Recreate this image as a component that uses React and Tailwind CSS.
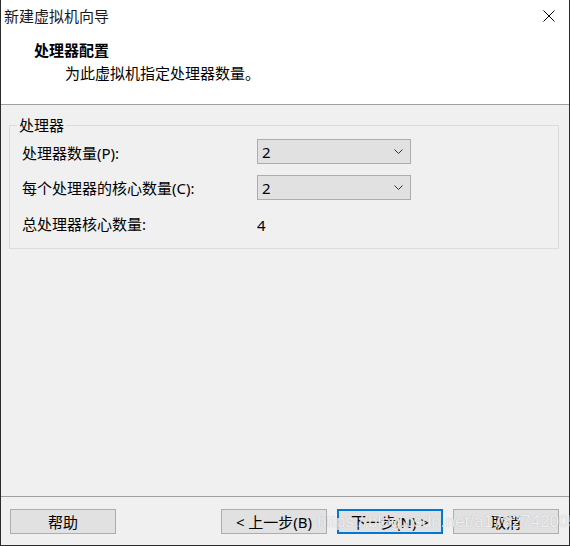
function Chevron() {
  return (
    <svg width="9" height="5" viewBox="0 0 9 5" className="block">
      <polyline points="0.5,0.5 4.5,4.5 8.5,0.5" fill="none" stroke="#333" strokeWidth="1" />
    </svg>
  );
}

function Select({ value }) {
  return (
    <div className="w-[154px] h-[25px] border border-[#adadad] bg-[#e1e1e1] flex items-center justify-between pl-[4px] pr-[7px]">
      <span>{value}</span>
      <Chevron />
    </div>
  );
}

function Button({ children, primary }) {
  return (
    <div
      className={
        primary
          ? "w-[106px] h-[25px] border-2 border-[#0078d7] bg-[#e1e1e1] flex items-center justify-center"
          : "w-[106px] h-[25px] border border-[#adadad] bg-[#e1e1e1] flex items-center justify-center"
      }
    >
      {children}
    </div>
  );
}

export default function App() {
  return (
    <div
      className="relative w-[570px] h-[546px] bg-[#f0f0f0] border-l border-r border-b border-[#2b2b2b] flex flex-col text-[15px] leading-[20px] text-black"
      style={{ fontFamily: '"Noto Sans", "Noto Sans CJK SC", sans-serif' }}
    >
      {/* header */}
      <div className="h-[105px] bg-white border-b border-[#a0a0a0] flex flex-col">
        <div className="mt-[6px] h-[20px] flex items-center justify-between pl-[3px] pr-[14px]">
          <span className="text-[#1a1a1a]">新建虚拟机向导</span>
          <svg width="12" height="12" viewBox="0 0 12 12">
            <path d="M0.5 0.5 L11.5 11.5 M11.5 0.5 L0.5 11.5" stroke="#000" strokeWidth="1" />
          </svg>
        </div>
        <div className="mt-[14px] pl-[33px] font-bold">处理器配置</div>
        <div className="mt-[3px] pl-[64px]">为此虚拟机指定处理器数量。</div>
      </div>

      {/* body */}
      <div className="flex-1 pt-[10px] pl-[8px] pr-[10px]">
        <fieldset className="border border-[#dcdcdc] pl-[7px] pb-[12px]">
          <legend className="px-[2px] h-[20px]">处理器</legend>
          <div className="pl-[5px] mt-[4px] flex flex-col gap-[11px]">
            <div className="h-[25px] flex items-center">
              <span className="w-[235px] pt-[2px]">处理器数量(P):</span>
              <Select value="2" />
            </div>
            <div className="h-[25px] flex items-center">
              <span className="w-[235px] pt-[1px]">每个处理器的核心数量(C):</span>
              <Select value="2" />
            </div>
            <div className="h-[25px] flex items-center">
              <span className="w-[235px] pt-[1px]">总处理器核心数量:</span>
              <span className="pt-[2px]">4</span>
            </div>
          </div>
        </fieldset>
      </div>

      {/* footer */}
      <div className="h-[49px] border-t border-[#a0a0a0] pt-[12px] pl-[9px] pr-[10px] flex items-start">
        <Button>帮助</Button>
        <div className="flex-1" />
        <div className="flex gap-[10px]">
          <Button>&lt; 上一步(B)</Button>
          <Button primary>下一步(N) &gt;</Button>
          <Button>取消</Button>
        </div>
      </div>

      {/* watermark */}
      <span
        className="absolute left-[316px] top-[512px] text-[17px] leading-[20px] text-white/80 pointer-events-none"
        style={{ fontFamily: '"Liberation Sans", sans-serif', textShadow: "0 0 1px rgba(120,120,120,0.6)" }}
      >
        https://blog.csdn.net/a1782742005
      </span>
    </div>
  );
}
